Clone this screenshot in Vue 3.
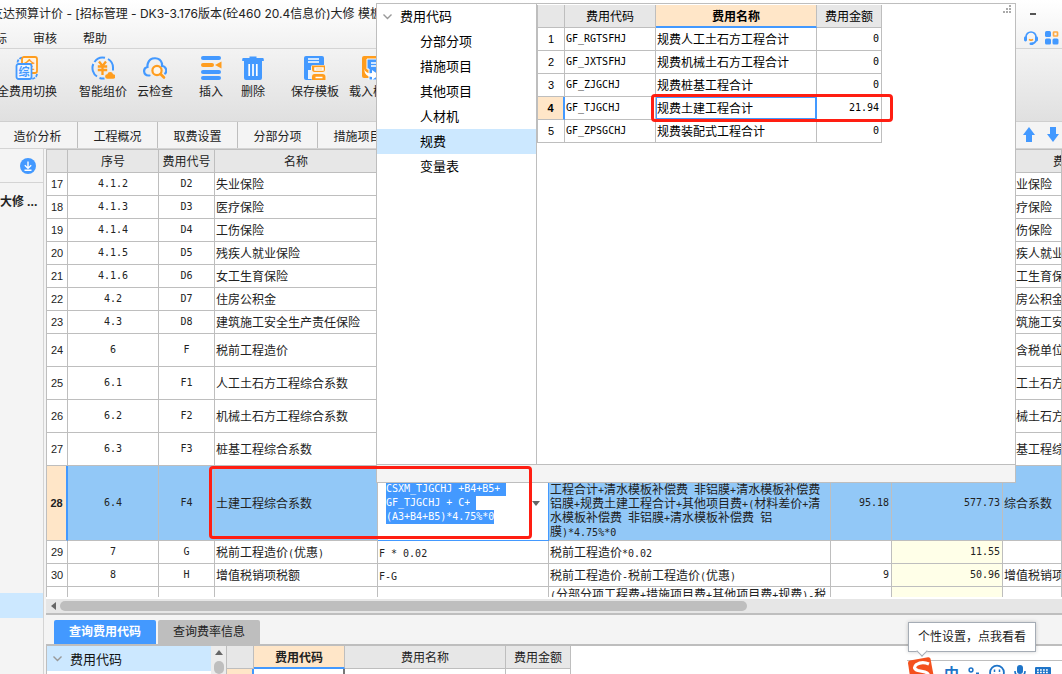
<script setup>
import { h, onMounted, ref } from 'vue'

const menus = ['招标', '审核', '帮助']
const tabs = ['造价分析', '工程概况', '取费设置', '分部分项', '措施项目']

const rows = [
  { n: 17, seq: '4.1.2', code: 'D2', name: '失业保险', note: '失业保险' },
  { n: 18, seq: '4.1.3', code: 'D3', name: '医疗保险', note: '医疗保险' },
  { n: 19, seq: '4.1.4', code: 'D4', name: '工伤保险', note: '工伤保险' },
  { n: 20, seq: '4.1.5', code: 'D5', name: '残疾人就业保险', note: '残疾人就业' },
  { n: 21, seq: '4.1.6', code: 'D6', name: '女工生育保险', note: '女工生育保' },
  { n: 22, seq: '4.2', code: 'D7', name: '住房公积金', note: '住房公积金' },
  { n: 23, seq: '4.3', code: 'D8', name: '建筑施工安全生产责任保险', note: '建筑施工安' },
  { n: 24, seq: '6', code: 'F', name: '税前工程造价', note: '不含税单位', size: 'mid' },
  { n: 25, seq: '6.1', code: 'F1', name: '人工土石方工程综合系数', note: '人工土石方', size: 'mid' },
  { n: 26, seq: '6.2', code: 'F2', name: '机械土石方工程综合系数', note: '机械土石方', size: 'mid' },
  { n: 27, seq: '6.3', code: 'F3', name: '桩基工程综合系数', note: '桩基工程综', size: 'mid' },
  {
    n: 28, seq: '6.4', code: 'F4', name: '土建工程综合系数', note: '综合系数', size: 'tall', active: true,
    desc: '工程合计+清水模板补偿费 非铝膜+清水模板补偿费\n铝膜+规费土建工程合计+其他项目费+(材料差价+清\n水模板补偿费 非铝膜+清水模板补偿费 铝\n膜)*4.75%*0',
    rate: '95.18', amount: '577.73'
  },
  { n: 29, seq: '7', code: 'G', name: '税前工程造价(优惠)', formula: 'F * 0.02', desc: '税前工程造价*0.02', amount: '11.55' },
  { n: 30, seq: '8', code: 'H', name: '增值税销项税额', formula: 'F-G', desc: '税前工程造价-税前工程造价(优惠)', rate: '9', amount: '50.96', note: '增值税销项' },
  { n: '', seq: '', code: '', name: '总造价', desc: '(分部分项工程费+措施项目费+其他项目费+规费)-税', size: 'last', note: '总造价' }
]

const tree = ['分部分项', '措施项目', '其他项目', '人材机', '规费', '变量表']
const fees = [
  ['GF_RGTSFHJ', '规费人工土石方工程合计', '0'],
  ['GF_JXTSFHJ', '规费机械土石方工程合计', '0'],
  ['GF_ZJGCHJ', '规费桩基工程合计', '0'],
  ['GF_TJGCHJ', '规费土建工程合计', '21.94'],
  ['GF_ZPSGCHJ', '规费装配式工程合计', '0']
]

const formula = ref('CSXM_TJGCHJ +B4+B5+\nGF_TJGCHJ + C+\n(A3+B4+B5)*4.75%*0')
const editor = ref(null)

// Wraps runs of Latin characters so that they take half the width of a Chinese one.
const Mixed = (props) =>
  h('span', { class: 'mixed' }, (props.text || '').split(/([\x20-\x7e]+)/).filter(Boolean).map((part) =>
    /^[\x20-\x7e]/.test(part) ? h('span', { class: 'half' }, part) : part
  ))
Mixed.props = ['text']

onMounted(() => {
  const el = [].concat(editor.value)[0]
  if (el) {
    el.focus({ preventScroll: true })
    el.select()
  }
})
</script>

<template>
  <div class="window">
    <header class="top">
      <div class="title"><span>友达预算计价 - [招标管理 - DK3-3.176版本(砼460 20.4信息价)大修 模板</span>
        <button class="minimize" aria-label="最小化"></button>
      </div>
      <nav class="menu">
        <a v-for="m in menus" :key="m" href="#">{{ m }}</a>
        <div class="tools">
          <button aria-label="客服">
            <svg width="16" height="16" viewBox="0 0 16 16" fill="none">
              <path d="M3 9.5V7a5 5 0 0 1 10 0v2.500M13 10.500c-.6 2-2 3-4.500 3.200" stroke="#4399ff" stroke-width="1.700" />
              <rect x="1" y="6.500" width="3" height="5" rx="1.400" fill="#4399ff" /><rect x="12" y="6.500" width="3" height="5" rx="1.400" fill="#4399ff" />
              <rect x="6.500" y="12.500" width="4" height="2.500" rx="1.200" fill="#4399ff" />
              <path d="M6 9.300q2 1.600 4 0" stroke="#ff9d1e" stroke-width="1.600" />
            </svg>
          </button>
          <button aria-label="应用">
            <svg width="14" height="14" viewBox="0 0 14 14">
              <rect x="0" y="0" width="6" height="6" rx="1.500" fill="#4399ff" /><rect x="0" y="7.500" width="6" height="6" rx="1.500" fill="#4399ff" />
              <rect x="7.500" y="7.500" width="6" height="6" rx="1.500" fill="#4399ff" />
              <rect x="8.500" y="1" width="4" height="4" rx=".5" fill="none" stroke="#ffab45" stroke-width="1.700" />
            </svg>
          </button>
        </div>
      </nav>
    </header>

    <div class="toolbar">
      <div class="group">
        <button>
          <svg width="24" height="24" viewBox="0 0 24 24">
            <path d="M2.500 6.500q.5-4 5-5" fill="none" stroke="#4399ff" stroke-width="1.800" stroke-dasharray="3 1.200" />
            <path d="M22 18q-.5 4-5 5" fill="none" stroke="#4399ff" stroke-width="1.800" stroke-dasharray="3 1.200" />
            <rect x="7" y="1" width="15" height="16" rx="2" fill="#fff4e2" stroke="#ff9d1e" stroke-width="1.800" />
            <text x="9" y="13" font-size="11" font-weight="700" fill="#ff9d1e">全</text>
            <rect x="1.500" y="8" width="15" height="15" rx="2" fill="#eff7ff" stroke="#4399ff" stroke-width="1.800" />
            <text x="3.500" y="19.500" font-size="11" font-weight="700" fill="#4399ff">综</text>
          </svg>
          <span>全费用切换</span>
        </button>
      </div>
      <div class="group">
        <button>
          <svg width="24" height="24" viewBox="0 0 24 24" fill="none">
            <path d="M6 20.500A10.200 10.200 0 0 1 2.300 8M3.500 6A10 10 0 0 1 14 1.800M17 3a10 10 0 0 1 5 9v2.500M8.500 22q2.500.9 5 .5" stroke="#4399ff" stroke-width="2" />
            <path d="M8 5.500l3.500 4.500L15 5.500M6.800 10.500h9.400M6.800 14h9.400M11.500 10v9" stroke="#ff9d1e" stroke-width="2.300" />
            <path d="M16.500 22.800a2.300 2.300 0 0 1-.2-4.600 3 3 0 0 1 5.800 0 2.300 2.300 0 0 1 0 4.600z" fill="#ff9d1e" />
          </svg>
          <span>智能组价</span>
        </button>
        <button>
          <svg width="24" height="24" viewBox="0 0 24 24" fill="none">
            <path d="M6.500 19.500H5.500A4.300 4.300 0 0 1 4.500 11 7.600 7.600 0 0 1 5 7 7.400 7.400 0 0 1 19 7.500V10a4.600 4.600 0 0 1 3.200 7.500" stroke="#4399ff" stroke-width="2.200" stroke-linecap="round" />
            <circle cx="14" cy="14.500" r="4.600" fill="#fff6e8" stroke="#ff9d1e" stroke-width="2.200" />
            <path d="M17.500 18l3.500 3.500" stroke="#ff9d1e" stroke-width="2.600" stroke-linecap="round" />
          </svg>
          <span>云检查</span>
        </button>
      </div>
      <div class="group roomy">
        <button>
          <svg width="24" height="24" viewBox="0 0 24 24">
            <g fill="#4399ff"><rect x="2" y="0" width="20" height="4" rx="2" /><rect x="2" y="14" width="20" height="4" rx="2" /><rect x="2" y="20" width="20" height="4" rx="2" /></g>
            <rect x="2" y="7" width="13" height="4" rx="2" fill="#ff9d1e" /><path d="M16 9l6.500-3.500v7z" fill="#ff9d1e" />
          </svg>
          <span>插入</span>
        </button>
        <button>
          <svg width="24" height="24" viewBox="0 0 24 24">
            <path d="M8.500 2V.5h7V2H22q.8 0 .8 1.500V5H1.200V3.500Q1.200 2 2 2zM3 4h18v18q0 2-2 2H5q-2 0-2-2z" fill="#4399ff" />
            <path d="M8.200 8v12M12 8v12M15.800 8v12" stroke="#fff" stroke-width="1.700" />
          </svg>
          <span>删除</span>
        </button>
      </div>
      <div class="group">
        <button>
          <svg width="24" height="24" viewBox="0 0 24 24">
            <path d="M3 0h16q2 0 2 2v22H3q-2 0-2-2V2q0-2 2-2z" fill="#4399ff" />
            <path d="M5 3h11M5 6h11" stroke="#fff" stroke-width="1.500" /><rect x="5" y="14" width="5" height="9" fill="#e9f3ff" />
            <rect x="8" y="9" width="16" height="15" rx="2" fill="#f4f0e8" />
            <path d="M9 9.500h13v4q0 2.500-2.500 2.500h-8Q9 16 9 13zM9 24v-3q0-3 2.500-3h8q3 0 3 3v3z" fill="#ff9d1e" />
            <path d="M12 12h8v2h-8zM12.500 21.500h7" fill="none" stroke="#fff" stroke-width="1.500" />
          </svg>
          <span>保存模板</span>
        </button>
        <button>
          <svg width="24" height="24" viewBox="0 0 24 24">
            <rect x="1" y="0" width="22" height="22" rx="2" fill="#ff9d1e" />
            <path d="M6 3h15v21H8V13H6z" fill="#4399ff" stroke="#fff" />
            <path d="M10 7h9M10 10h9" stroke="#fff" stroke-width="1.500" />
            <path d="M3 13q2 5 8 4v-3l7 5-7 5v-3Q4 21 3 13z" fill="#fff" />
          </svg>
          <span>载入模板</span>
        </button>
      </div>
    </div>

    <div class="tabbar">
      <button v-for="t in tabs" :key="t">{{ t }}</button>
      <div class="moves">
        <button aria-label="上移"><svg width="12" height="16" viewBox="0 0 12 16"><path d="M6 0l6 8H9v7H3V8H0z" fill="#4399ff" /></svg></button>
        <button aria-label="下移"><svg width="12" height="16" viewBox="0 0 12 16"><path d="M6 15L0 7h3V0h6v7h3z" fill="#4399ff" /></svg></button>
      </div>
    </div>

    <div class="body">
      <aside class="side">
        <div class="side-head">
          <button aria-label="下载">
            <svg width="16" height="16" viewBox="0 0 16 16"><circle cx="8" cy="8" r="8" fill="#4399ff" /><path d="M8 3.500v6.500M4.800 7.300L8 10.400l3.200-3.100M4.500 12.300h7" fill="none" stroke="#fff" stroke-width="1.400" /></svg>
          </button>
        </div>
        <b class="side-item">大修 ...</b>
        <div class="side-active"></div>
      </aside>

      <main class="main">
        <div class="grid-wrap">
          <table class="grid">
            <colgroup><col class="c-n"><col class="c-seq"><col class="c-code"><col class="c-name"><col class="c-formula"><col class="c-desc"><col class="c-rate"><col class="c-amount"><col></colgroup>
            <thead>
              <tr><th></th><th>序号</th><th>费用代号</th><th>名称</th><th></th><th></th><th></th><th></th><th class="last-head">费</th></tr>
            </thead>
            <tbody>
              <tr v-for="(r, i) in rows" :key="i" :class="[r.size, { active: r.active }]">
                <th scope="row">{{ r.n }}</th>
                <td class="mid-cell half">{{ r.seq }}</td>
                <td class="mid-cell half">{{ r.code }}</td>
                <td><Mixed :text="r.name" /></td>
                <td v-if="r.active" class="edit-cell">
                  <div class="edit">
                    <textarea ref="editor" v-model="formula" rows="3" aria-label="计算公式" spellcheck="false"></textarea>
                    <button aria-label="选择费用代码"><svg width="8" height="5" viewBox="0 0 8 5"><path d="M0 0h8L4 5z" fill="#666" /></svg></button>
                  </div>
                </td>
                <td v-else><Mixed :text="r.formula" /></td>
                <td class="desc"><Mixed :text="r.desc" /></td>
                <td class="num half">{{ r.rate }}</td>
                <td class="num half amount">{{ r.amount }}</td>
                <td><Mixed :text="r.note" /></td>
              </tr>
            </tbody>
          </table>
        </div>
        <div class="hscroll"><svg width="5" height="8" viewBox="0 0 5 8"><path d="M5 0v8L0 4z" fill="#666" /></svg><i class="thumb"></i></div>

        <section class="lower">
          <div class="lower-tabs"><button class="on">查询费用代码</button><button>查询费率信息</button></div>
          <div class="lower-body">
            <div class="lower-tree">
              <div class="lower-item">
                <svg width="9" height="6" viewBox="0 0 9 6"><path d="M.5.5l4 4 4-4" fill="none" stroke="#999" stroke-width="1.400" /></svg>费用代码
              </div>
              <div class="vscroll"><svg width="8" height="5" viewBox="0 0 8 5"><path d="M0 5h8L4 0z" fill="#666" /></svg><i></i></div>
            </div>
            <table class="grid lower-grid">
              <colgroup><col class="l-n"><col class="l-code"><col class="l-name"><col class="l-amount"></colgroup>
              <thead><tr><th></th><th class="current">费用代码</th><th>费用名称</th><th>费用金额</th></tr></thead>
              <tbody><tr><th class="marked"></th><td class="framed"></td><td></td><td></td></tr></tbody>
            </table>
          </div>
        </section>
      </main>
    </div>

    <div class="popup">
      <div class="popup-body">
        <ul class="tree">
          <li class="root"><svg width="9" height="6" viewBox="0 0 9 6"><path d="M.5.5l4 4 4-4" fill="none" stroke="#999" stroke-width="1.400" /></svg>费用代码</li>
          <li v-for="t in tree" :key="t" :class="{ on: t === '规费' }">{{ t }}</li>
        </ul>
        <div class="popup-grid">
          <table class="grid fees">
            <colgroup><col class="p-n"><col class="p-code"><col class="p-name"><col class="p-amount"></colgroup>
            <thead><tr><th></th><th>费用代码</th><th class="current">费用名称</th><th>费用金额</th></tr></thead>
            <tbody>
              <tr v-for="(f, i) in fees" :key="f[0]" :class="{ picked: i === 3 }">
                <th scope="row">{{ i + 1 }}</th>
                <td class="half">{{ f[0] }}</td><td class="fee-name">{{ f[1] }}</td><td class="num half">{{ f[2] }}</td>
              </tr>
            </tbody>
          </table>
          <svg class="grip" width="8" height="8" viewBox="0 0 8 8" fill="#aaa"><path d="M6 0h2v2H6zM3 3h2v2H3zM6 3h2v2H6zM0 6h2v2H0zM3 6h2v2H3zM6 6h2v2H6z" /></svg>
        </div>
      </div>
      <div class="popup-foot"></div>
    </div>

    <div class="mark mark-fee"></div>
    <div class="mark mark-row"></div>

    <div class="ime">
      <svg width="28" height="26" viewBox="0 0 28 26">
        <path d="M1 6q0-2 2-2.400L21 .2q2-.3 2.500 1.600L28 26H4z" fill="#f4511e" />
        <path d="M22 7Q15 4 9.500 7.500 5 11.500 11 13.500l7 1.500q5 1.500 2 4.500-4 3-12 1" fill="none" stroke="#fff" stroke-width="3.200" />
      </svg>
      <b>中</b>
      <svg width="12" height="16" viewBox="0 0 12 16"><circle cx="3" cy="6" r="1.900" fill="none" stroke="#1e74c8" stroke-width="1.500" /><path d="M8 8.500h3v3l-2 2.500V12H8z" fill="#1e74c8" /></svg>
      <svg width="16" height="16" viewBox="0 0 16 16" fill="none" stroke="#1e74c8" stroke-width="1.800"><circle cx="8" cy="8.500" r="6.900" /><path d="M5.500 5.500v2.500M10.500 5.500v2.500M4.500 10q3.500 4 7 0" stroke-width="1.500" /></svg>
      <svg width="12" height="16" viewBox="0 0 12 16"><rect x="3" y="1" width="6" height="9" rx="3" fill="#1e74c8" /><path d="M1 7q0 5 5 5t5-5M6 12v3" fill="none" stroke="#1e74c8" stroke-width="1.600" /></svg>
      <svg width="16" height="16" viewBox="0 0 16 16"><rect x="0" y="3" width="16" height="11" rx="1" fill="#1e74c8" /><path d="M2 6h12M2 8.500h12" stroke="#fff" stroke-width="1.400" stroke-dasharray="1.800 1.200" /><path d="M4 11.500h8" stroke="#fff" stroke-width="1.300" /></svg>
      <svg width="14" height="16" viewBox="0 0 14 16" fill="#b7c3d6"><circle cx="7" cy="5" r="3.500" /><path d="M0 15q0-6 7-6t7 6z" /></svg>
    </div>
    <div class="tip" role="tooltip">个性设置，点我看看</div>
  </div>
</template>

<style>
body { margin: 0; overflow: hidden; }
</style>

<style scoped>
* { box-sizing: border-box; }
.window {
  position: relative; display: flex; flex-direction: column; height: 100vh; overflow: hidden;
  background: #f4f4f4; color: #222; font: 12px/14px "Open Sans", "Noto Sans CJK SC", sans-serif;
}
button { border: 0; padding: 0; background: none; color: inherit; font: inherit; }
svg { display: block; flex: none; }
.top { flex: 0 0 49px; background: linear-gradient(#fff, #f1f1f1); border-bottom: 1px solid #d4d4d4; }
.title { display: flex; align-items: center; justify-content: space-between; height: 28px; padding-right: 26px; white-space: nowrap; font-family: Inter, "Noto Sans CJK SC", sans-serif; }
.title span { margin-left: -9px; }
.minimize { width: 6px; height: 2px; background: #555; }
.menu { display: flex; align-items: center; gap: 26px; height: 20px; padding-right: 3px; }
.menu a { padding-top: 1px; color: inherit; text-decoration: none; }
.menu a:first-child { margin-left: -17px; }
.tools { display: flex; align-items: center; gap: 6px; margin-left: auto; }
.toolbar { display: flex; flex: 0 0 73px; padding-top: 7px; background: linear-gradient(#f3f3f3, #e0e0e0); border-bottom: 1px solid #cfcfcf; white-space: nowrap; }
.group { display: flex; align-items: flex-start; margin-left: 12px; }
.group:first-child { margin-left: -8px; }
.group button { display: flex; flex-direction: column; align-items: center; gap: 4px; padding: 0 5px; line-height: 16px; }
.group.roomy button { padding: 0 9px; }
.tabbar { display: flex; flex: 0 0 27px; background: #f4f4f4; border-bottom: 1px solid #d4d4d4; }
.tabbar > button { width: 80px; border-right: 1px solid #bebebe; padding-top: 3px; }
.tabbar > button:first-child { margin-left: -2px; }
.moves { display: flex; align-items: center; gap: 12px; margin-left: auto; padding-right: 3px; }

.body { display: flex; flex: 1; min-height: 0; }
.side { display: flex; flex-direction: column; flex: 0 0 44px; border-right: 1px solid #d4d4d4; overflow: hidden; white-space: nowrap; }
.side-head { display: flex; align-items: center; justify-content: flex-end; height: 34px; padding-right: 7px; border-bottom: 1px solid #d4d4d4; }
.side-item { margin-top: 11px; line-height: 16px; }
.side-active { height: 25px; margin-top: auto; margin-bottom: 56px; background: #cce8ff; }
.main { display: flex; flex-direction: column; flex: 1; min-width: 0; margin-left: 2px; }
.grid-wrap { flex: 1; min-height: 0; overflow: hidden; border: 1px solid #bebebe; border-width: 1px 0 0 1px; background: #fff; }

.grid { table-layout: fixed; border-collapse: separate; border-spacing: 0; width: 100%; font: 12px/14px "Noto Sans CJK SC", sans-serif; }
.grid td, .grid th { height: 23px; padding: 0 1px; border: 1px solid #bebebe; border-width: 0 1px 1px 0; font-weight: 400; white-space: nowrap; overflow: hidden; }
.grid thead th { background: #e7e7e7; }
.grid tbody th { padding: 0; font: 11px/14px "Liberation Sans", Arial, sans-serif; text-align: center; }
.grid .half, .grid :deep(.half) { font-family: "DejaVu Sans Mono", monospace; font-size: 10px; white-space: pre-wrap; }
.grid :deep(.mixed .half) { line-height: 0; }
.grid td.half { white-space: nowrap; }
.grid .mid-cell { text-align: center; }
.grid .num { padding-right: 2px; text-align: right; }
.c-n { width: 21px; } .c-seq { width: 91px; } .c-code { width: 56px; } .c-name { width: 163px; }
.c-formula { width: 171px; } .c-desc { width: 282px; } .c-rate { width: 61px; } .c-amount { width: 111px; }
.grid th.last-head { padding-left: 50px; text-align: left; }
.grid .amount { background: #ffffe8; }
.grid .mid > * { height: 33px; }
.grid .last > * { height: 33px; }
.grid .last .desc { vertical-align: top; }
.grid .tall > * { height: 75px; }
.grid .tall .desc { padding-top: 14px; }
.desc :deep(.mixed) { white-space: pre-line; }
.grid .active td { background: #92c8f7; }
.grid .active th, .grid .picked th, .grid th.marked { background: #ffe6c8; font-weight: 700; border-right: 2px solid #4399ff; }
.grid .active td.edit-cell { padding: 0; background: #fff; border-color: #4399ff; }
.edit { display: flex; align-items: center; padding: 0 8px; }
.edit textarea { display: block; flex: 1; min-width: 0; height: 42px; padding: 0; border: 0; outline: 0; resize: none; overflow: hidden; background: none; color: #222; font: 10px/14px "DejaVu Sans Mono", monospace; }
.edit textarea::selection { background: #4399ff; color: #fff; }

.hscroll { display: flex; align-items: center; gap: 4px; flex: 0 0 16px; padding-left: 5px; border-top: 2px solid #fff; background: #e6e6e6; }
.thumb { width: 68%; height: 10px; border-radius: 5px; background: #bebebe; }
.lower { flex: 0 0 61px; border-top: 2px solid #bebebe; }
.lower-tabs { display: flex; gap: 2px; height: 31px; padding: 5px 8px 0; border-bottom: 2px solid #bebebe; }
.lower-tabs button { width: 102px; border-radius: 2px 2px 0 0; background: #bebebe; }
.lower-tabs .on { background: #4399ff; color: #fff; font-weight: 700; }
.lower-body { display: flex; height: 28px; background: #fff; overflow: hidden; }
.lower-tree { display: flex; flex: 0 0 180px; border-left: 1px solid #bebebe; font-size: 13px; }
.lower-item { display: flex; align-items: center; gap: 8px; flex: 1; height: 25px; padding-left: 6px; background: #cce8ff; color: #111; }
.vscroll { display: flex; flex-direction: column; align-items: center; gap: 6px; width: 15px; padding-top: 4px; background: #ececec; }
.vscroll i { width: 10px; height: 30px; border-radius: 5px; background: #bebebe; }
.lower-grid { width: 345px; border-left: 1px solid #bebebe; }
.l-n { width: 27px; } .l-code { width: 91px; } .l-name { width: 161px; } .l-amount { width: 65px; }
.grid thead th.current { background: #ffe6c8; font-weight: 700; border-bottom: 2px solid #4399ff; }
.grid td.framed { border-right: 2px solid #777; }

.popup { position: absolute; left: 376px; top: 3px; display: flex; flex-direction: column; width: 640px; height: 480px; border: 1px solid #bebebe; background: #fff; }
.popup-body { display: flex; flex: 1; }
.tree { flex: 0 0 160px; margin: 0; padding: 0; border-right: 1px solid #bebebe; list-style: none; color: #000; font-size: 13px; line-height: 25px; }
.tree li { padding-left: 43px; }
.tree .root { display: flex; align-items: center; gap: 8px; padding-left: 6px; }
.tree .on { background: #cce8ff; }
.popup-grid { display: flex; flex: 1; align-items: flex-start; justify-content: space-between; padding: 1px 4px 0 0; }
.fees { width: 345px; border-left: 1px solid #bebebe; color: #000; }
.p-n { width: 27px; } .p-code { width: 91px; } .p-name { width: 161px; } .p-amount { width: 65px; }
.fees .picked .fee-name { box-shadow: inset 1px 0 #4399ff, inset 0 1px #4399ff; border-right: 2px solid #4399ff; border-bottom: 2px solid #4399ff; }
.popup-foot { height: 18px; border-top: 1px solid #bebebe; background: #f4f4f4; }

.mark { position: absolute; border: 3px solid #ff1e12; border-radius: 4px; pointer-events: none; }
.mark-fee { left: 651px; top: 94px; width: 242px; height: 28px; }
.mark-row { left: 209px; top: 466px; width: 323px; height: 73px; }

.ime { position: absolute; right: 0; bottom: 0; display: flex; align-items: flex-start; gap: 9px; width: 155px; height: 14px; border-top: 1px solid #bebebe; background: #fff; }
.ime svg { margin-top: 3px; }
.ime svg:first-child { margin-top: -4px; }
.ime b { color: #1e74c8; font-size: 15px; line-height: 24px; }
.tip { position: absolute; right: 26px; bottom: 22px; width: 128px; border: 1px solid #a5acb5; background: #fff; box-shadow: 0 0 4px #0003; line-height: 28px; text-align: center; white-space: nowrap; }
.tip::after { content: ""; position: absolute; left: 9px; bottom: -4px; width: 7px; height: 7px; border: 1px solid #a5acb5; border-width: 0 1px 1px 0; background: #fff; transform: rotate(45deg); }
</style>
